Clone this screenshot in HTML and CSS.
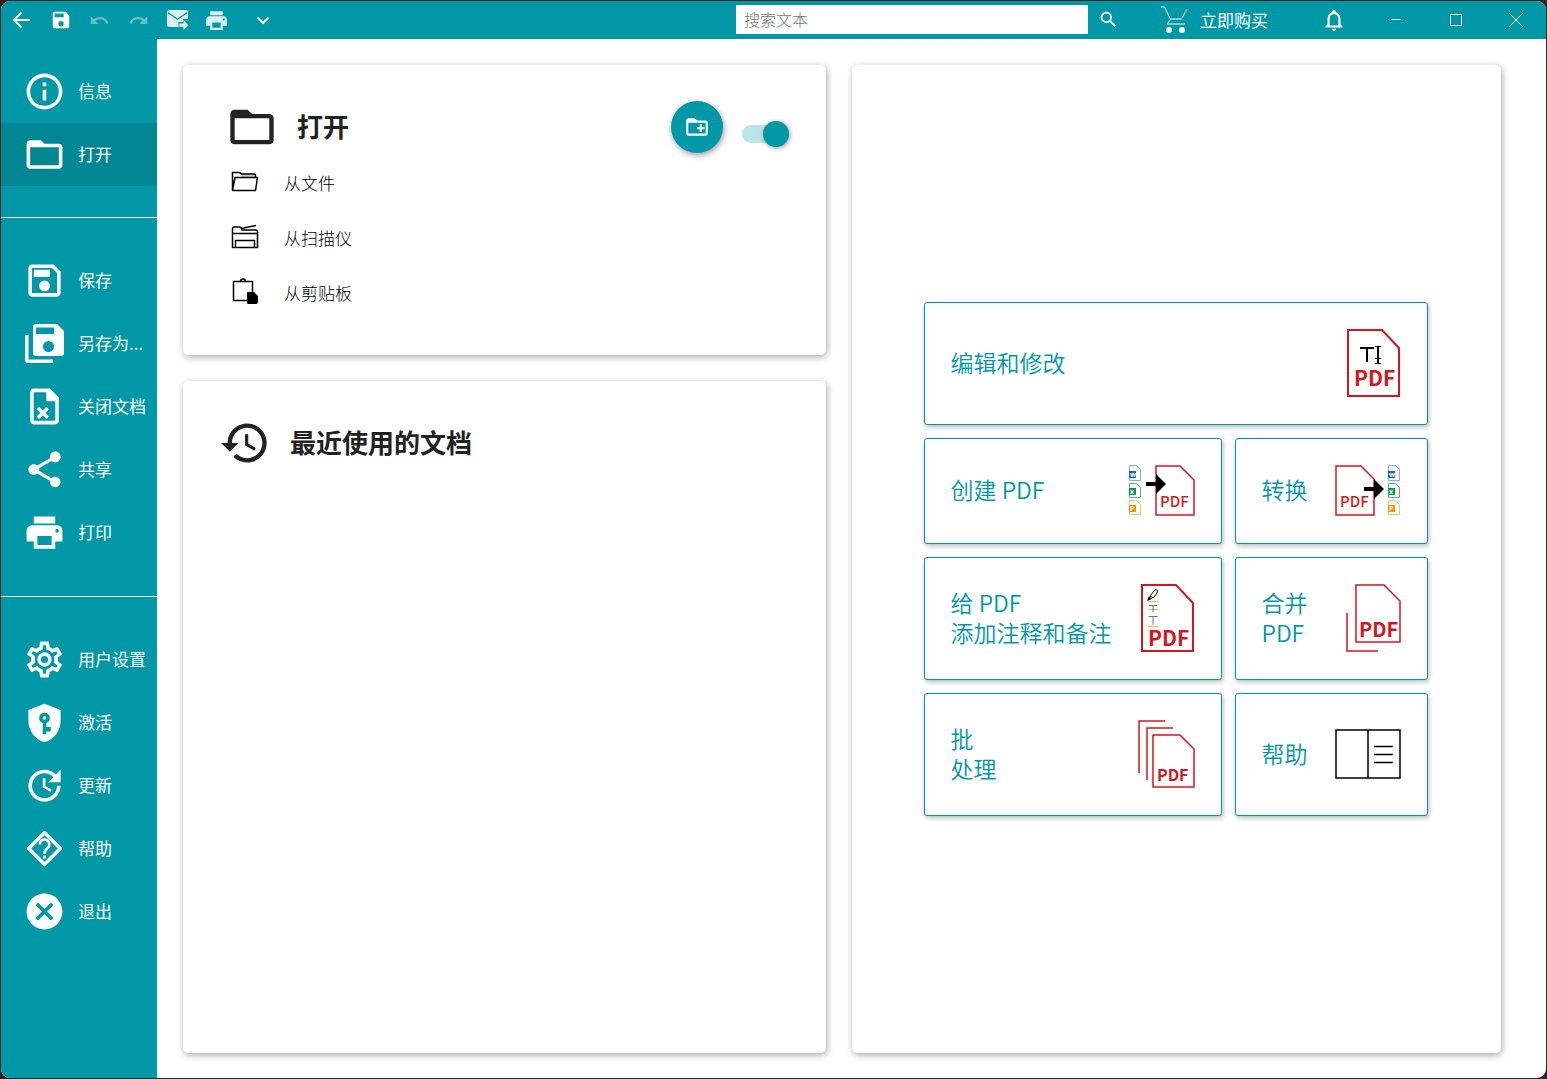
FILE: index.html
```html
<!DOCTYPE html>
<html lang="zh-CN">
<head>
<meta charset="utf-8">
<meta name="viewport" content="width=device-width, initial-scale=1">
<title>打开</title>
<link rel="stylesheet" href="styles.css">
</head>
<body>
<svg class="defs" aria-hidden="true">
  <symbol id="i-folder" viewBox="0 0 24 24"><path d="M20 6h-8l-2-2H4c-1.100 0-2 .9-2 2v12c0 1.100.9 2 2 2h16c1.100 0 2-.9 2-2V8c0-1.100-.9-2-2-2zm0 12H4V8h16v10z"/></symbol>
  <symbol id="i-print" viewBox="0 0 24 24"><path d="M19 8H5c-1.660 0-3 1.340-3 3v6h4v4h12v-4h4v-6c0-1.660-1.340-3-3-3zm-3 11H8v-5h8v5zm3-7c-.55 0-1-.45-1-1s.45-1 1-1 1 .45 1 1-.45 1-1 1zm-1-9H6v4h12V3z"/></symbol>
  <symbol id="i-docs" viewBox="0 0 13 52">
    <g fill="#fff"><path stroke="#84afdb" d="M.5.5h7l4 4v11h-11z"/><path stroke="#4fb87a" d="M.5 18.500h7l4 4v10h-11z"/><path stroke="#fbc26c" d="M.5 35.500h7l4 4v10h-11z"/></g>
    <path fill="#1768b3" d="M0 6h7v7H0z"/><path fill="#0a9a48" d="M0 23h7v7H0z"/><path fill="#f39200" d="M0 40h7v7H0z"/>
  </symbol>
</svg>
<div class="window">
  <header class="titlebar">
    <div class="tools">
      <button type="button" aria-label="返回"><svg width="20" height="20" viewBox="0 0 20 20"><path class="line w2" d="M18 10H2.500M9.500 2.500 2 10l7.500 7.500"/></svg></button>
      <button type="button" aria-label="保存"><svg width="22" height="22" viewBox="0 0 24 24"><path d="M17 3H5c-1.110 0-2 .9-2 2v14c0 1.100.89 2 2 2h14c1.100 0 2-.9 2-2V7l-4-4zm-5 16c-1.660 0-3-1.340-3-3s1.340-3 3-3 3 1.340 3 3-1.340 3-3 3zm3-10H5V5h10v4z"/></svg></button>
      <button type="button" aria-label="撤销" disabled><svg width="21" height="21" viewBox="0 0 24 24"><path d="M12.500 8c-2.650 0-5.050.99-6.900 2.600L2 7v9h9l-3.620-3.620c1.390-1.160 3.160-1.880 5.120-1.880 3.540 0 6.550 2.310 7.600 5.500l2.370-.78C21.080 11.030 17.150 8 12.500 8z"/></svg></button>
      <button type="button" aria-label="重做" disabled><svg width="21" height="21" viewBox="0 0 24 24"><path d="M18.400 10.600C16.550 8.990 14.150 8 11.500 8c-4.650 0-8.580 3.030-9.960 7.220L3.900 16c1.050-3.190 4.050-5.500 7.600-5.500 1.950 0 3.730.72 5.120 1.880L13 16h9V7l-3.600 3.600z"/></svg></button>
      <button type="button" class="soft" aria-label="发送邮件"><svg width="22" height="22" viewBox="0 0 22 22"><path fill-rule="evenodd" d="M2 1h17q2 0 2 2v7h-5v3h-4.500v5H2q-2 0-2-2V3q0-2 2-2zM1 3l9.500 6.500L20 3V4.500L10.500 11 1 4.500z"/><path d="M12.500 14.500h4V11l5 5.500-5 4.500v-3h-4z"/></svg></button>
      <button type="button" class="soft" aria-label="打印"><svg width="25" height="25"><use href="#i-print"/></svg></button>
      <button type="button" class="more" aria-label="更多"><svg width="14" height="14" viewBox="0 0 14 14"><path class="line w2" d="M1.500 4.500 7 10l5.500-5.500"/></svg></button>
    </div>
    <form class="search" role="search">
      <input type="text" placeholder="搜索文本" aria-label="搜索文本">
      <button type="button" aria-label="搜索"><svg width="21" height="21" viewBox="0 0 24 24"><path d="M15.500 14h-.79l-.28-.27C15.410 12.590 16 11.110 16 9.500 16 5.910 13.090 3 9.500 3S3 5.910 3 9.500 5.910 16 9.500 16c1.610 0 3.090-.59 4.230-1.570l.27.28v.79l5 4.990L20.490 19l-4.990-5zm-6 0C7.010 14 5 11.990 5 9.500S7.010 5 9.500 5 14 7.010 14 9.500 11.990 14 9.500 14z"/></svg></button>
    </form>
    <a class="buy" href="#"><svg width="27" height="27" viewBox="0 0 27 27"><path class="line w1" d="M0 1h3.500l6 12.500L6 18h18M9.500 13h11L26 3"/><circle cx="8" cy="24" r="3"/><circle cx="21" cy="24" r="3"/></svg><span>立即购买</span></a>
    <div class="controls">
      <button type="button" class="bell" aria-label="通知"><svg width="26" height="26" viewBox="0 0 24 24"><path d="M12 22c1.100 0 2-.9 2-2h-4c0 1.100.9 2 2 2zm6-6v-5c0-3.070-1.630-5.640-4.500-6.320V4c0-.83-.67-1.500-1.500-1.500s-1.500.67-1.500 1.500v.68C7.640 5.360 6 7.920 6 11v5l-2 2v1h16v-1l-2-2zm-2 1H8v-6c0-2.480 1.510-4.500 4-4.500s4 2.020 4 4.500v6z"/></svg></button>
      <button type="button" aria-label="最小化"><svg width="14" height="14" viewBox="0 0 14 14"><path class="line w1" d="M2 6.500h10"/></svg></button>
      <button type="button" aria-label="最大化"><svg width="14" height="14" viewBox="0 0 14 14"><path class="line w1" d="M1.500 1.500h11v11h-11z"/></svg></button>
      <button type="button" aria-label="关闭"><svg width="14" height="14" viewBox="0 0 14 14"><path class="line w1" d="m0 0 14 14M14 0 0 14"/></svg></button>
    </div>
  </header>
  <div class="body">
    <nav class="sidebar">
      <ul>
        <li><a href="#"><svg viewBox="0 0 24 24"><path d="M11 7h2v2h-2zm0 4h2v6h-2zm1-9C6.480 2 2 6.480 2 12s4.480 10 10 10 10-4.480 10-10S17.520 2 12 2zm0 18c-4.410 0-8-3.590-8-8s3.590-8 8-8 8 3.590 8 8-3.590 8-8 8z"/></svg><span>信息</span></a></li>
        <li><a href="#" class="active" aria-current="page"><svg><use href="#i-folder"/></svg><span>打开</span></a></li>
      </ul>
      <ul>
        <li><a href="#"><svg viewBox="0 0 24 24"><path fill-rule="evenodd" d="M17 3H5c-1.110 0-2 .9-2 2v14c0 1.100.89 2 2 2h14c1.100 0 2-.9 2-2V7l-4-4zm2 16H5V5h11.170L19 7.830V19z"/><path d="M6 6h9v4H6z"/><circle cx="12" cy="15" r="3"/></svg><span>保存</span></a></li>
        <li><a href="#"><svg viewBox="0 0 43 43"><path fill-rule="evenodd" d="M13 2h21l7 7v22q0 3-3 3H13q-3 0-3-3V5q0-3 3-3zm0 3.500V12h18V5.500zM25.500 19a5.500 5.500 0 1 0 0 11 5.500 5.500 0 0 0 0-11z"/><path d="M2 13h3.500v24.500H30V41H5q-3 0-3-3z"/></svg><span>另存为...</span></a></li>
        <li><a href="#"><svg viewBox="0 0 24 24"><path fill-rule="evenodd" d="M6 2h9l5 5v13c0 1.100-.9 2-2 2H6c-1.100 0-2-.9-2-2V4c0-1.100.9-2 2-2zm0 2v16h12V9h-5V4z"/><path class="line w2" d="m8.300 12.800 5.500 5.500m0-5.500-5.500 5.500"/></svg><span>关闭文档</span></a></li>
        <li><a href="#"><svg viewBox="0 0 24 24"><path d="M18 16.080c-.76 0-1.440.3-1.960.77L8.910 12.700c.05-.23.09-.46.09-.7s-.04-.47-.09-.7l7.050-4.110c.54.5 1.250.81 2.040.81 1.660 0 3-1.340 3-3s-1.340-3-3-3-3 1.340-3 3c0 .24.04.47.09.7L8.040 9.810C7.500 9.310 6.790 9 6 9c-1.660 0-3 1.340-3 3s1.340 3 3 3c.79 0 1.500-.31 2.040-.81l7.120 4.160c-.05.21-.08.43-.08.65 0 1.610 1.310 2.920 2.920 2.920s2.920-1.310 2.920-2.920-1.310-2.920-2.920-2.920z"/></svg><span>共享</span></a></li>
        <li><a href="#"><svg><use href="#i-print"/></svg><span>打印</span></a></li>
      </ul>
      <ul>
        <li><a href="#"><svg viewBox="0 0 24 24"><path d="M12 8a4 4 0 0 1 4 4 4 4 0 0 1-4 4 4 4 0 0 1-4-4 4 4 0 0 1 4-4m0 2a2 2 0 0 0-2 2 2 2 0 0 0 2 2 2 2 0 0 0 2-2 2 2 0 0 0-2-2m-2 12c-.25 0-.46-.18-.5-.42l-.37-2.650c-.63-.25-1.170-.59-1.690-.99l-2.490 1.010c-.22.080-.49 0-.61-.22l-2-3.460c-.13-.22-.07-.49.12-.64l2.110-1.660L4.500 12l.07-1-2.110-1.630c-.19-.15-.25-.42-.12-.64l2-3.460c.12-.22.390-.31.610-.22l2.490 1c.52-.39 1.060-.73 1.690-.98l.37-2.650c.04-.24.25-.42.5-.42h4c.25 0 .46.180.5.420l.37 2.650c.63.250 1.170.590 1.690.980l2.490-1c.22-.09.490 0 .610.220l2 3.460c.13.220.070.490-.12.640L19.430 11l.07 1-.07 1 2.110 1.630c.19.150.250.420.120.640l-2 3.460c-.12.220-.39.310-.61.220l-2.490-1c-.52.390-1.060.730-1.690.980l-.37 2.650c-.04.240-.25.420-.5.420h-4m1.250-18-.37 2.610c-1.200.25-2.260.89-3.030 1.780L5.440 7.350l-.75 1.300L6.800 10.200a5.550 5.550 0 0 0 0 3.600l-2.120 1.560.75 1.300 2.430-1.040c.77.880 1.820 1.520 3.010 1.760l.37 2.620h1.520l.37-2.610c1.190-.25 2.240-.89 3.010-1.770l2.430 1.040.75-1.300-2.120-1.550c.4-1.170.4-2.440 0-3.610l2.110-1.550-.75-1.300-2.410 1.040a5.420 5.420 0 0 0-3.030-1.770L12.750 4h-1.500z"/></svg><span>用户设置</span></a></li>
        <li><a href="#"><svg viewBox="0 0 24 24"><path fill-rule="evenodd" d="M12 1.500 3 5v6c0 5.550 3.840 10.740 9 12 5.160-1.260 9-6.450 9-12V5zm0 5a3 3 0 0 1 1 5.820V14.500h2.500v2.500H13v1.500h-2v-6.180A3 3 0 0 1 12 6.500zm0 2a1 1 0 0 0 0 2 1 1 0 0 0 0-2z"/></svg><span>激活</span></a></li>
        <li><a href="#"><svg viewBox="0 0 24 24"><path d="M21 10.120h-6.780l2.740-2.820c-2.730-2.700-7.150-2.800-9.880-.1-2.730 2.710-2.730 7.080 0 9.790s7.150 2.710 9.880 0C18.320 15.650 19 14.080 19 12.100h2c0 1.980-.88 4.550-2.640 6.290-3.510 3.480-9.210 3.480-12.720 0-3.500-3.470-3.530-9.110-.02-12.580s9.140-3.470 12.650 0L21 3v7.120zM12.500 8v4.250l3.500 2.080-.72 1.210L11 13V8h1.500z"/></svg><span>更新</span></a></li>
        <li><a href="#"><svg viewBox="0 0 24 24"><path class="line w2" stroke-linejoin="round" d="M12 3.200 20.800 12 12 20.800 3.200 12z"/><path d="M11.200 16h1.600v1.600h-1.600z"/><path class="line w15" d="M9.300 9.700a2.700 2.700 0 1 1 4.400 2.100c-1 .8-1.700 1.200-1.700 3.200"/></svg><span>帮助</span></a></li>
        <li><a href="#"><svg viewBox="0 0 24 24"><path d="M12 2C6.470 2 2 6.470 2 12s4.470 10 10 10 10-4.470 10-10S17.530 2 12 2zm5 13.590L15.590 17 12 13.410 8.410 17 7 15.590 10.590 12 7 8.410 8.410 7 12 10.590 15.590 7 17 8.410 13.410 12 17 15.590z"/></svg><span>退出</span></a></li>
      </ul>
    </nav>
    <main class="content">
      <section class="card open-card">
        <div class="card-head">
          <svg><use href="#i-folder"/></svg>
          <h1>打开</h1>
          <button type="button" class="fab" aria-label="添加文件夹"><svg width="26" height="26" viewBox="0 0 24 24"><path d="M20 6h-8l-2-2H4c-1.100 0-2 .9-2 2v12c0 1.100.9 2 2 2h16c1.100 0 2-.9 2-2V8c0-1.100-.9-2-2-2zm0 12H4V8h16v10z"/><path d="M12 12h2.500V9.500h2V12H19v2h-2.500v2.500h-2V14H12z"/></svg></button>
          <input class="toggle" type="checkbox" checked aria-label="显示文件夹">
        </div>
        <ul class="sources">
          <li><a href="#"><svg viewBox="0 0 28 28"><path fill="#ccc" d="M11 4h13v3H11z"/><path class="line w15" stroke-linejoin="round" d="M1.500 21V2.500h6q2 0 3 1.500h13q1 0 1 1.500V7M1.500 20.500 4 7.500h22.500l-2 13H2"/></svg><span>从文件</span></a></li>
          <li><a href="#"><svg viewBox="0 0 28 28"><path class="line w15" stroke-linejoin="round" d="M1.500 22.500V4q0-2 2-2h5q1.500 0 2.500 3h13.500q2 0 2 2v15.500zM10 3.500 25 .5M1.500 8.500h25M4.500 22v-6.500h19V22"/></svg><span>从扫描仪</span></a></li>
          <li><a href="#"><svg viewBox="0 0 28 28"><path class="line w15" d="M2.500 1.500h19v19h-19zM9.500 1.500q0-2.500 2.500-2.500t2.500 2.500"/><path d="M17 12h6l4 4v6q0 2-2 2h-8q-1 0-1-2v-9q0-1 1-1z"/></svg><span>从剪贴板</span></a></li>
        </ul>
      </section>
      <section class="card recent-card">
        <div class="card-head">
          <svg viewBox="0 0 24 24"><path d="M13 3c-4.970 0-9 4.030-9 9H1l3.890 3.890.07.14L9 12H6c0-3.870 3.130-7 7-7s7 3.130 7 7-3.130 7-7 7c-1.930 0-3.680-.79-4.940-2.060l-1.420 1.420C8.270 19.990 10.510 21 13 21c4.970 0 9-4.030 9-9s-4.030-9-9-9zm-1 5v5l4.280 2.540.72-1.210-3.500-2.080V8H12z"/></svg>
          <h2>最近使用的文档</h2>
        </div>
      </section>
      <section class="card actions-card">
        <div class="actions">
          <button type="button" class="wide"><span>编辑和修改</span>
            <svg width="54" height="69" viewBox="0 0 54 69"><path class="page w2" d="M1 1h34l17 18v48H1z"/><text class="pdf semi" x="7" y="57" font-size="21">PDF</text><path class="line w2" d="M13 19h14M20 19v14"/><path class="line w1" stroke-width="1" d="M28 17.500h6M28 34.500h6M28 29.500h6"/><path class="line w2" d="M31 17v17"/></svg></button>
          <button type="button"><span>创建 PDF</span>
            <svg width="66" height="52" viewBox="0 0 66 52"><use href="#i-docs" width="13" height="52"/><g class="doc-letter"><text x="1" y="12">w</text><text x="1" y="29">x</text><text x="1" y="46">P</text></g><path class="page w15" d="M27 1h24l14 14v35H27z"/><path d="M17 17h10V9l10 10-10 10v-8H17z"/><text class="pdf" x="31" y="42" font-size="15">PDF</text></svg></button>
          <button type="button"><span>转换</span>
            <svg width="66" height="52" viewBox="0 0 66 52"><path class="page w15" d="M1 1h25l13 13v36H1z"/><path d="M29 22h10v-8l10 10-10 10v-8H29z"/><text class="pdf" x="5" y="42" font-size="15">PDF</text><use href="#i-docs" x="53" width="13" height="52"/><g class="doc-letter"><text x="54" y="12">w</text><text x="54" y="29">x</text><text x="54" y="46">P</text></g></svg></button>
          <button type="button"><span>给 PDF<br>添加注释和备注</span>
            <svg width="54" height="69" viewBox="0 0 54 69"><path class="page w2" d="M1 1h34l17 18v48H1z"/><text class="pdf bold" x="7" y="62" font-size="21">PDF</text><path d="m6 17 2-5 3 3z"/><path class="line w1" d="m9 12 4-5q2-2 3-1t0 3l-4 5z"/><path stroke="#f9b04c" d="M7 17.500h10M7 25.500h10M7 42.500h10"/><path class="line w1 gray" d="M8 21.500h8M12 22v6M7.500 32.500h9M12 33v8"/></svg></button>
          <button type="button"><span>合并<br>PDF</span>
            <svg width="56" height="69" viewBox="0 0 56 69"><path class="page w15" d="M11 1h28l16 16v41H11zM2 29v38h31"/><text class="pdf semi" x="14" y="53" font-size="20">PDF</text></svg></button>
          <button type="button"><span>批<br>处理</span>
            <svg width="57" height="69" viewBox="0 0 57 69"><path class="page w15" d="M15 15h27l14 14v38H15zM1 53V1h26M9 60V8h26"/><text class="pdf semi" x="19" y="61" font-size="16">PDF</text></svg></button>
          <button type="button"><span>帮助</span>
            <svg width="66" height="52" viewBox="0 0 66 52"><path class="line w15" d="M1 1h64v48H1zM33 1v48M39 17.500h19M39 25.500h19M39 33.500h19"/></svg></button>
        </div>
      </section>
    </main>
  </div>
</div>
</body>
</html>
```
FILE: styles.css
```css
* { box-sizing: border-box; }
:root { --teal: #0097a7; --ink: #222; }
body {
  margin: 0;
  padding: 1px;
  height: 100vh;
  background: #33211f;
  font-family: "Noto Sans CJK SC", sans-serif;
  font-size: 17px;
}
button, input { font: inherit; color: inherit; margin: 0; padding: 0; border: 0; background: none; }
a { color: inherit; text-decoration: none; }
ul { list-style: none; margin: 0; padding: 0; }
h1, h2 { margin: 0; padding-bottom: 2px; font-size: 26px; line-height: 36px; font-weight: 700; }
svg { fill: currentColor; flex: none; display: block; overflow: visible; }
.defs { position: absolute; width: 0; height: 0; }
.line { fill: none; stroke: currentColor; }
.w1 { stroke-width: 1px; }
.w15 { stroke-width: 1.5px; }
.w2 { stroke-width: 2px; }

.window { height: 100%; display: flex; flex-direction: column; border-radius: 9px; overflow: hidden; background: #fff; }

.titlebar { flex: none; height: 38px; display: flex; align-items: stretch; background: var(--teal); color: #fff; }
.titlebar button { display: flex; align-items: center; justify-content: center; }
.tools { display: flex; padding-left: 1px; }
.tools button { width: 39px; }
.tools .more { margin-left: 7px; }
.tools button:disabled { opacity: .4; }
.tools .soft { color: #dcf1f3; }
.search { display: flex; align-items: center; margin-left: auto; padding-bottom: 1px; }
.search input { width: 352px; height: 29px; padding: 0 8px 2px; background: #fff; color: #222; font-size: 16px; font-weight: 300; }
.search input::placeholder { color: #777; opacity: 1; }
.search button { width: 40px; height: 100%; }
.buy { display: flex; align-items: center; gap: 12px; margin: 0 34px 0 33px; padding-bottom: 2px; }
.controls { display: flex; padding-bottom: 1px; }
.controls button { width: 60px; }
.controls .bell { width: 64px; }

.body { flex: 1; min-height: 0; display: flex; }
.sidebar { flex: none; width: 156px; padding-top: 21px; background: var(--teal); color: #fff; }
.sidebar ul + ul { margin-top: 31px; padding-top: 31px; border-top: 1px solid #fff; }
.sidebar ul:last-child { margin-top: 32px; }
.sidebar a { display: flex; align-items: center; gap: 12px; height: 63px; padding-left: 22px; white-space: nowrap; }
.sidebar svg { width: 43px; height: 43px; }
.sidebar span, .sources span { padding-bottom: 2px; }
.sidebar .active { background: #008793; }

.content {
  flex: 1;
  min-width: 0;
  display: grid;
  grid-template-columns: 643fr 649fr;
  grid-template-rows: auto 1fr;
  gap: 26px;
  padding: 26px 45px 25px 26px;
}
.card { min-width: 0; border-radius: 5px; background: #fff; box-shadow: 1px 2px 7px rgba(0, 0, 0, .35); color: var(--ink); }
.card-head { display: flex; align-items: center; gap: 19px; }
.card-head > svg { width: 52px; height: 52px; }
.open-card { padding: 36px 37px 34px 43px; }
.recent-card { padding: 36px; }
.actions-card { grid-column: 2; grid-row: 1 / 3; display: flex; align-items: center; justify-content: center; padding: 24px 26px 24px 24px; }

.fab { display: flex; align-items: center; justify-content: center; width: 52px; height: 52px; margin-left: auto; border-radius: 50%; background: var(--teal); color: #fff; box-shadow: 1px 2px 6px rgba(0, 0, 0, .4); }
.toggle { appearance: none; flex: none; display: flex; align-items: center; justify-content: flex-end; width: 47px; height: 18px; margin-top: 14px; border-radius: 9px; background: #bce4e8; }
.toggle::before { content: ""; flex: none; width: 26px; height: 26px; border-radius: 50%; background: var(--teal); box-shadow: 1px 1px 5px rgba(0, 0, 0, .4); }
.toggle:not(:checked) { justify-content: flex-start; }

.sources { padding-top: 3px; color: #000; font-weight: 300; }
.sources a { display: flex; align-items: center; gap: 25px; height: 55px; padding-left: 5px; }
.sources svg { width: 28px; height: 28px; }

.actions { display: grid; grid-template-columns: 298fr 193fr; gap: 13px; width: 100%; max-width: 504px; }
.actions button {
  display: flex; align-items: center; justify-content: space-between; gap: 12px;
  padding: 26px;
  border: 1px solid var(--teal); border-radius: 3px;
  background: #fff; color: var(--teal);
  box-shadow: 1px 2px 5px rgba(0, 0, 0, .28);
  font-size: 23px; line-height: 30px; font-weight: 350; text-align: left;
}
.actions .wide { grid-column: 1 / 3; }
.actions span { padding-bottom: 3px; margin-top: -1px; white-space: nowrap; }
.actions svg { color: #000; }
.page { fill: none; stroke: #d2181f; }
.pdf { fill: #d2181f; font-weight: 500; }
.semi { font-weight: 600; }
.bold { font-weight: 700; }
.gray { color: #777; }
.doc-letter { fill: #fff; font: 700 7px "Open Sans", sans-serif; }
```
